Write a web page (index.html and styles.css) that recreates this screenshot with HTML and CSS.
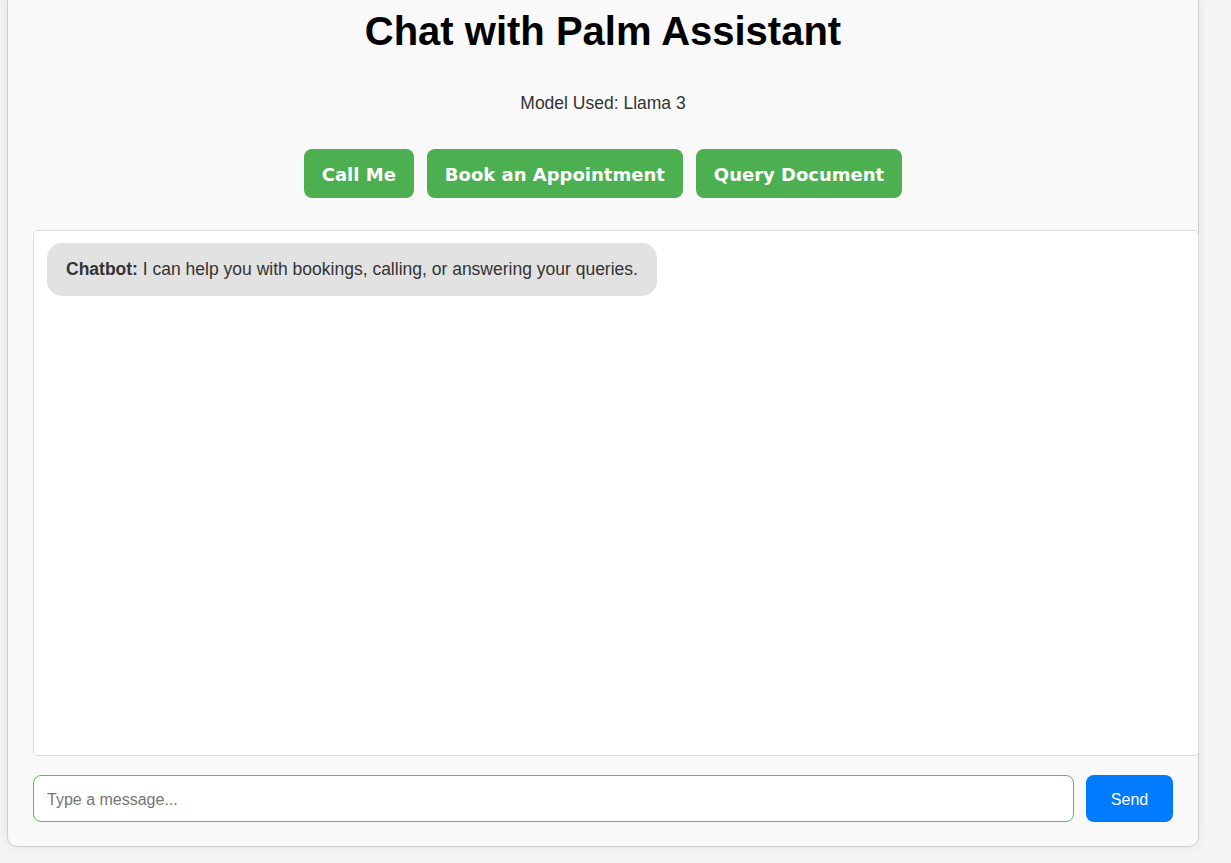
FILE: index.html
```html
<!DOCTYPE html>
<html lang="en">
<head>
<meta charset="utf-8">
<title>Chat with Palm Assistant</title>
<link rel="stylesheet" href="styles.css">
</head>
<body>
<div class="container">
  <h1 class="title">Chat with Palm Assistant</h1>
  <p class="model">Model Used: Llama 3</p>
  <div class="actions">
    <button class="action">Call Me</button>
    <button class="action">Book an Appointment</button>
    <button class="action">Query Document</button>
  </div>
  <div class="chat-box">
    <div class="bubble"><strong>Chatbot:</strong> I can help you with bookings, calling, or answering your queries.</div>
  </div>
  <div class="input-row">
    <input class="msg" type="text" placeholder="Type a message...">
    <button class="send">Send</button>
  </div>
</div>
</body>
</html>
```
FILE: styles.css
```css
html, body {
  margin: 0;
  padding: 0;
  background: #f4f4f4;
  font-family: "Liberation Sans", Arial, sans-serif;
  color: #333;
}
body {
  padding-left: 7px;
  height: 863px;
  overflow: hidden;
}
.container {
  width: 1140px;
  margin-top: -13px;
  padding: 20px 25px 24px;
  background: #f9f9f9;
  border: 1px solid #cfcfcf;
  border-radius: 10px;
  box-shadow: 0 0 10px rgba(0, 0, 0, 0.08);
}
.title {
  margin: 0;
  font-size: 40px;
  line-height: 46px;
  font-weight: bold;
  color: #000;
  text-align: center;
}
.model {
  margin: 39px 0 0;
  font-size: 17.5px;
  line-height: 20px;
  text-align: center;
  color: #333;
}
.actions {
  margin-top: 36px;
  display: flex;
  justify-content: center;
  gap: 13px;
}
.action {
  background: #4caf50;
  color: #fff;
  border: none;
  border-radius: 8px;
  padding: 13px 18px 11px;
  font-family: "DejaVu Sans", Verdana, sans-serif;
  font-weight: bold;
  font-size: 18px;
  line-height: 25px;
  cursor: pointer;
}
.chat-box {
  margin-top: 32px;
  width: 100%;
  height: 500px;
  padding: 12px;
  background: #fff;
  border: 1px solid #ddd;
  border-radius: 5px;
}
.bubble {
  display: inline-block;
  margin-left: 1px;
  padding: 17px 19px;
  background: #e2e2e2;
  border-radius: 15px;
  font-size: 17.5px;
  line-height: 19px;
  color: #333;
}
.input-row {
  margin-top: 19px;
  display: flex;
  gap: 12px;
}
.msg {
  flex: 1;
  box-sizing: border-box;
  height: 47px;
  padding: 3px 13px 0;
  border: 1px solid #5cb85c;
  border-radius: 8px;
  font-family: "Liberation Sans", Arial, sans-serif;
  font-size: 16px;
  background: #fff;
  outline: none;
}
.msg::placeholder {
  color: #757575;
}
.send {
  box-sizing: border-box;
  height: 47px;
  width: 87px;
  padding: 3px 0 0;
  border: none;
  border-radius: 8px;
  background: #007bff;
  color: #fff;
  font-family: "Liberation Sans", Arial, sans-serif;
  font-size: 16px;
  cursor: pointer;
}
```
